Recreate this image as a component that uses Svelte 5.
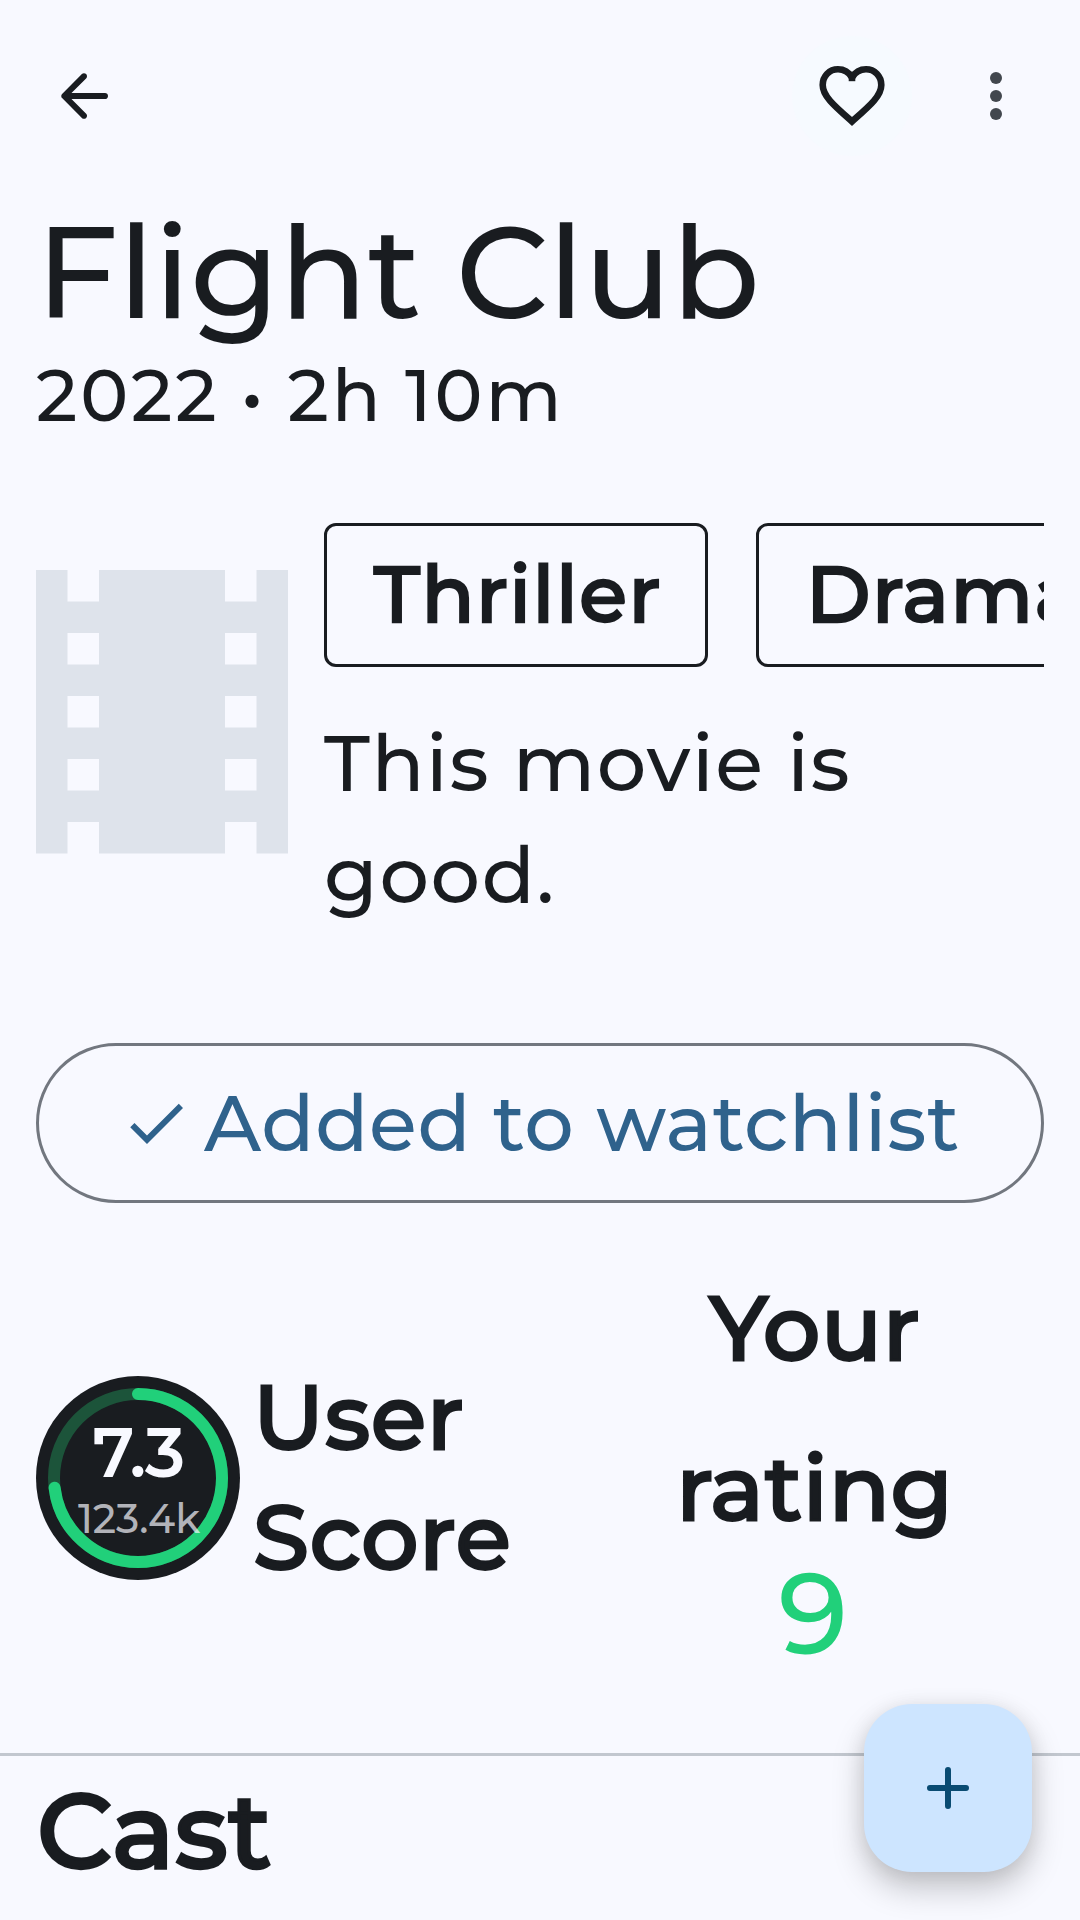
<script>
  const genres = ['Thriller', 'Drama'];
  const score = 7.3;
  const circumference = 2 * Math.PI * 84;
</script>

<main class="screen">
  <header class="bar">
    <button class="icon" aria-label="Back">
      <svg width="72" height="72" viewBox="0 0 24 24" fill="#191c20">
        <path d="M7.825 13l4.900 4.900q.3.3.288.7t-.313.700q-.3.275-.7.288t-.7-.288l-6.600-6.600q-.15-.15-.213-.325T4.425 12t.062-.375t.213-.325l6.600-6.600q.275-.275.688-.275t.712.275q.3.300.3.713t-.3.712L7.825 11H19q.425 0 .713.288T20 12t-.288.713T19 13z" />
      </svg>
    </button>
    <span class="spacer"></span>
    <button class="icon favorite" aria-label="Favorite">
      <svg width="78" height="78" viewBox="0 0 78 78" fill="none" stroke="#191c20" stroke-width="6.6" stroke-miterlimit="1.5">
        <path d="M39 64.5C21 48.5 9.7 39 9.7 28C9.7 19 16.5 12.3 25 12.3C31 12.3 36 15.500 39 20.500C42 15.500 47 12.3 53 12.3C61.500 12.3 68.300 19 68.300 28C68.300 39 57 48.500 39 64.500Z" />
        <path d="M39 19V24.200" />
      </svg>
    </button>
    <button class="icon more" aria-label="More options">
      <svg width="72" height="72" viewBox="0 0 24 24" fill="#42474e">
        <circle cx="12" cy="6" r="2" /><circle cx="12" cy="12" r="2" /><circle cx="12" cy="18" r="2" />
      </svg>
    </button>
  </header>

  <h1>Flight Club</h1>
  <p class="meta">2022 • 2h 10m</p>

  <section class="info">
    <svg class="poster" viewBox="4 3 16 18" fill="#dee3eb">
      <path d="M18 3v2h-2V3H8v2H6V3H4v18h2v-2h2v2h8v-2h2v2h2V3h-2zM8 17H6v-2h2v2zm0-4H6v-2h2v2zm0-4H6V7h2v2zm10 8h-2v-2h2v2zm0-4h-2v-2h2v2zm0-4h-2V7h2v2z" />
    </svg>
    <div class="details">
      <div class="chips">
        {#each genres as genre}
          <span class="chip">{genre}</span>
        {/each}
      </div>
      <p class="overview">This movie is good.</p>
    </div>
  </section>

  <button class="watchlist">
    <svg width="72" height="72" viewBox="0 0 24 24" fill="#2f628c"><path d="M9 16.170 4.830 12l-1.420 1.410L9 19 21 7l-1.410-1.410z" /></svg>
    <span>Added to watchlist</span>
  </button>

  <section class="ratings">
    <div class="badge">
      <svg class="ring" viewBox="0 0 204 204" fill="none" stroke-width="12">
        <circle cx="102" cy="102" r="102" fill="#191c20" />
        <circle cx="102" cy="102" r="84" stroke="#1c543a" />
        <circle cx="102" cy="102" r="84" stroke="#21d07a" stroke-linecap="round" stroke-dasharray="{(circumference * score) / 10} {circumference}" transform="rotate(-90 102 102)" />
      </svg>
      <div class="values">
        <strong>{score}</strong>
        <small>123.4k</small>
      </div>
    </div>
    <h2 class="user">User<br />Score</h2>
    <div class="yours">
      <h2>Your<br />rating</h2>
      <span class="mine">9</span>
    </div>
  </section>

  <hr />
  <h3>Cast</h3>

  <button class="fab" aria-label="Add">
    <svg width="72" height="72" viewBox="0 0 24 24" fill="none" stroke="#094b72" stroke-width="2" stroke-linecap="round"><path d="M6 12h12M12 6v12" /></svg>
  </button>
</main>

<style>
  :global(body) { background: #f8f9ff; }
  .screen {
    position: relative;
    box-sizing: border-box;
    width: 1080px;
    height: 1920px;
    overflow: hidden;
    background: #f8f9ff;
    color: #191c20;
    font-family: Montserrat, Inter, sans-serif;
    font-weight: 500;
  }
  h1, h2, h3, p { margin: 0; font-weight: inherit; }
  h1, .meta { padding-left: 36px; }
  button { margin: 0; padding: 0; border: 0; background: none; font: inherit; color: inherit; }
  svg { display: block; flex: none; }

  /* Headings are the medium cut thickened by 1/32 em */
  h2, h3, .chip, strong { font-weight: 500; -webkit-text-stroke: 0.03125em currentColor; }

  .bar { display: flex; align-items: center; height: 192px; padding: 0 12px; }
  .spacer { flex: 1; }
  .icon { display: grid; place-items: center; width: 144px; height: 144px; }
  .favorite { width: 120px; height: 120px; border-radius: 50%; background: #f6faff; }
  .more { margin-left: 12px; }

  h1 { margin-top: 6px; font-size: 129.600px; line-height: 148px; letter-spacing: -0.150px; }
  .meta { padding-top: 2px; font-size: 72px; line-height: 94px; letter-spacing: 2.900px; word-spacing: -1px; }

  .info { display: flex; gap: 36px; padding: 81px 36px 0; }
  .poster { width: 252px; height: 283.500px; margin-top: 47px; }
  .details { flex: 1; min-width: 0; }
  .chips { display: flex; gap: 48px; overflow: hidden; }
  .chip {
    flex: none;
    box-sizing: border-box;
    width: 384px;
    height: 144px;
    padding-left: 47px;
    border: 3px solid #191c20;
    border-radius: 12px;
    font-size: 78px;
    letter-spacing: 1.600px;
    line-height: 136px;
  }
  .overview { margin-top: 40px; font-size: 78px; line-height: 112px; letter-spacing: 1.600px; }

  .watchlist {
    display: flex;
    align-items: center;
    box-sizing: border-box;
    width: 1008px;
    height: 160px;
    margin: 112px 36px 0;
    padding-left: 81px;
    border: 3px solid #72777f;
    border-radius: 80px;
    color: #2f628c;
    font-size: 78px;
    line-height: 112px;
    letter-spacing: 0.640px;
  }
  .watchlist span { margin-left: 12px; }

  .ratings { display: flex; align-items: center; height: 458px; margin: 46px 36px; }
  .badge { display: grid; flex: none; width: 204px; height: 204px; }
  .ring, .values { grid-area: 1 / 1; }
  .values { display: flex; flex-direction: column; align-items: center; padding: 44px 0 0 2px; }
  .values strong { font-size: 67px; line-height: 64px; color: #f8f9ff; }
  .values small { margin-top: 9px; font-size: 40.500px; line-height: 52px; color: rgba(248, 249, 255, 0.7); }
  h2 { font-size: 90px; line-height: 120px; letter-spacing: 0.800px; }
  .user { flex: 1; padding: 0 0 3px 13px; }
  .yours { display: flex; flex-direction: column; align-items: center; align-self: flex-start; width: 462px; text-align: center; }
  .yours h2 { margin-top: -1px; padding-left: 4px; line-height: 160px; }
  .mine { margin-top: 2px; font-size: 113px; line-height: 88px; color: #21d07a; }

  hr { height: 3px; margin: 0; border: 0; background: #c2c7cf; }
  h3 { margin-top: 4px; padding-left: 37px; font-size: 105px; line-height: 140px; letter-spacing: 0.500px; }

  .fab {
    position: absolute;
    right: 48px;
    bottom: 48px;
    display: grid;
    place-items: center;
    width: 168px;
    height: 168px;
    border-radius: 48px;
    background: #cde5ff;
    box-shadow: 0 16px 32px rgba(0, 0, 0, 0.22), 0 2px 20px rgba(0, 0, 0, 0.08);
  }
</style>
